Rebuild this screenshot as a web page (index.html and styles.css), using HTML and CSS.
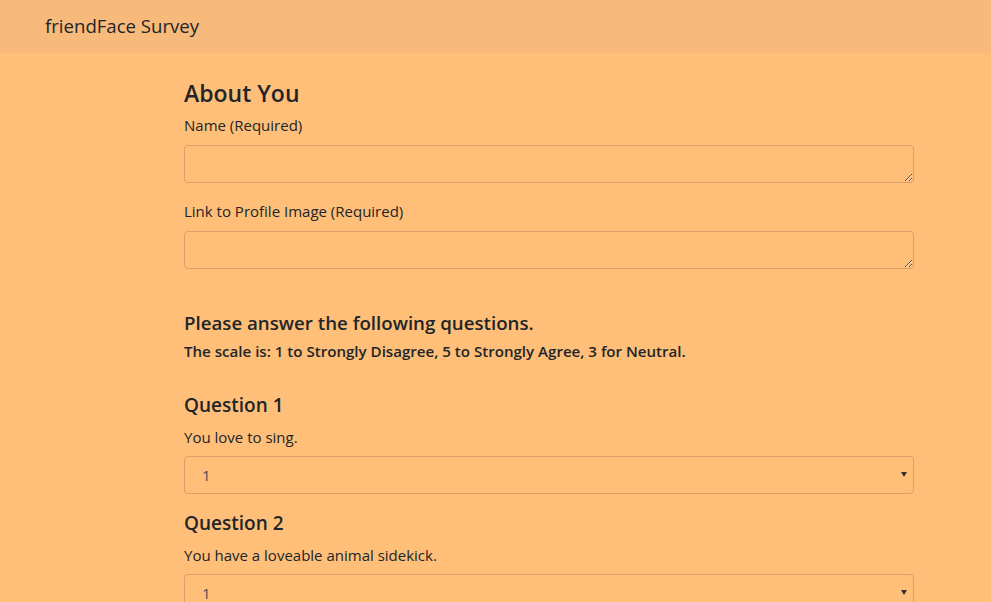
FILE: index.html
```html
<!DOCTYPE html>
<html lang="en">
<head>
<meta charset="utf-8">
<title>friendFace Survey</title>
<link rel="stylesheet" href="styles.css">
</head>
<body>
<nav class="navbar"><span class="brand">friendFace Survey</span></nav>
<main class="content">
  <h3 class="section-title">About You</h3>
  <div class="form-group">
    <label class="label" for="name">Name (Required)</label>
    <textarea id="name" class="field field-text" rows="1"></textarea>
  </div>
  <div class="form-group">
    <label class="label" for="photo">Link to Profile Image (Required)</label>
    <textarea id="photo" class="field field-text" rows="1"></textarea>
  </div>
  <h5 class="questions-title">Please answer the following questions.</h5>
  <h6 class="scale">The scale is: 1 to Strongly Disagree, 5 to Strongly Agree, 3 for Neutral.</h6>
  <div class="question">
    <h5 class="question-title">Question 1</h5>
    <label class="label" for="q1">You love to sing.</label>
    <div class="select-wrap">
      <select id="q1" class="field field-select"><option>1</option><option>2</option><option>3</option><option>4</option><option>5</option></select>
    </div>
  </div>
  <div class="question">
    <h5 class="question-title">Question 2</h5>
    <label class="label" for="q2">You have a loveable animal sidekick.</label>
    <div class="select-wrap">
      <select id="q2" class="field field-select"><option>1</option><option>2</option><option>3</option><option>4</option><option>5</option></select>
    </div>
  </div>
</main>
</body>
</html>
```
FILE: styles.css
```css
* { box-sizing: border-box; }
html, body { margin: 0; padding: 0; }
body {
  background: #ffbf78;
  color: #212529;
  font-family: "Open Sans", "Noto Sans", sans-serif;
  font-size: 15px;
  line-height: 24px;
  overflow: hidden;
  height: 602px;
}
.navbar {
  height: 53px;
  background: #f7ba7b;
  display: flex;
  align-items: center;
  padding-left: 45px;
}
.brand {
  font-size: 18.6px;
  color: #212529;
  padding-bottom: 1px;
}
.content {
  margin-left: 184px;
  width: 730px;
  padding-top: 26px;
}
h3, h5, h6 { margin: 0; font-weight: 600; }
.section-title {
  font-size: 23px;
  line-height: 29px;
  margin-bottom: 5px;
}
.label {
  display: block;
  margin-bottom: 8px;
  font-size: 15px;
  line-height: 24px;
}
.form-group { margin-bottom: 16px; }
.field {
  display: block;
  width: 100%;
  height: 38px;
  border: 1px solid #d9a06a;
  border-radius: 4px;
  background: transparent;
  font-family: inherit;
  font-size: 15px;
  color: #495057;
  padding: 6px 12px;
  margin: 0;
}
.field-text { resize: vertical; }
.questions-title {
  margin-top: 42px;
  font-size: 18.7px;
  line-height: 24px;
  margin-bottom: 7px;
}
.scale {
  font-size: 15.1px;
  line-height: 19px;
  margin-bottom: 32px;
}
.question { margin-bottom: 17px; }
.question-title {
  font-size: 19px;
  line-height: 24px;
  margin-bottom: 8px;
}
.question .label { margin-bottom: 7px; }
.select-wrap { position: relative; }
.field-select {
  appearance: none;
  -webkit-appearance: none;
  padding-left: 17px;
}
.select-wrap::after {
  content: "";
  position: absolute;
  right: 7px;
  top: 16px;
  border-left: 3px solid transparent;
  border-right: 3px solid transparent;
  border-top: 5px solid #333;
}
```
